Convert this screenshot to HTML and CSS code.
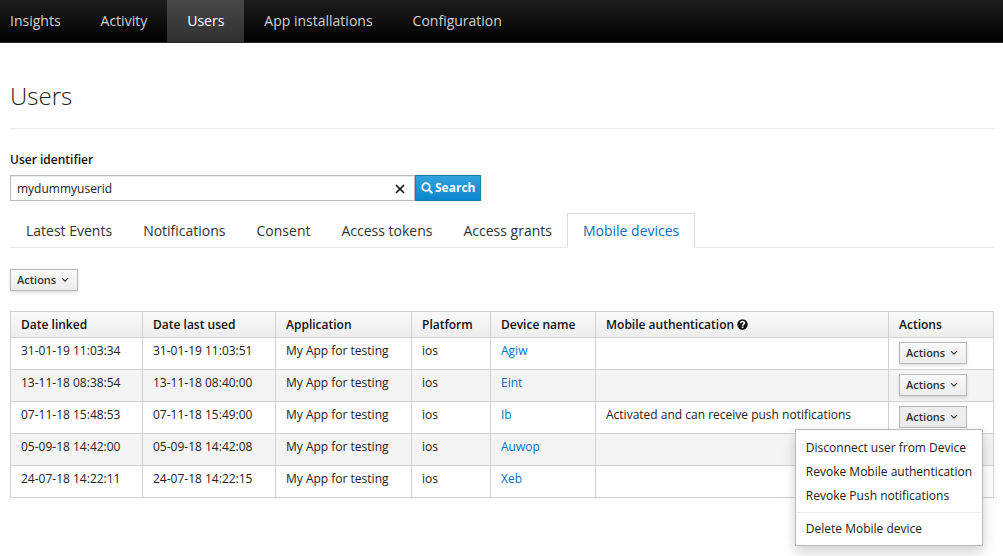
FILE: index.html
```html
<!DOCTYPE html>
<html lang="en">
<head>
    <meta charset="UTF-8">
    <meta name="viewport" content="width=device-width, initial-scale=1.0">
    <title>Users</title>
    <link rel="stylesheet" href="styles.css">
</head>
<body>

<svg class="sprite" aria-hidden="true">
    <symbol id="angle-down" viewBox="0 0 8 6">
        <path d="M1 1.2 L4 4.2 L7 1.2" fill="none" stroke="currentColor" stroke-width="1.2"/>
    </symbol>
</svg>

<nav class="navbar">
    <a href="#">Insights</a>
    <a href="#">Activity</a>
    <a href="#" class="active">Users</a>
    <a href="#">App installations</a>
    <a href="#">Configuration</a>
</nav>

<main class="container">
    <h1>Users</h1>

    <form class="search">
        <label for="userId">User identifier</label>
        <div class="search-row">
            <div class="search-field">
                <input type="text" id="userId" value="mydummyuserid">
                <button type="button" class="clear" aria-label="Clear">
                    <svg width="10" height="10" viewBox="0 0 10 10"><path d="M1 1 L9 9 M9 1 L1 9" stroke="currentColor" stroke-width="1.7"/></svg>
                </button>
            </div>
            <button type="submit" class="btn-primary">
                <svg width="12" height="12" viewBox="0 0 12 12"><circle cx="5" cy="5" r="3.8" fill="none" stroke="currentColor" stroke-width="1.7"/><path d="M7.8 7.8 L10.8 10.8" stroke="currentColor" stroke-width="2.1" stroke-linecap="round"/></svg>
                Search
            </button>
        </div>
    </form>

    <div class="tabs">
        <a href="#">Latest Events</a>
        <a href="#">Notifications</a>
        <a href="#">Consent</a>
        <a href="#">Access tokens</a>
        <a href="#">Access grants</a>
        <a href="#" class="active">Mobile devices</a>
    </div>

    <button type="button" class="btn">Actions <svg width="8" height="6"><use href="#angle-down"/></svg></button>

    <table class="devices">
        <colgroup>
            <col class="col-linked">
            <col class="col-used">
            <col class="col-app">
            <col class="col-platform">
            <col class="col-name">
            <col>
            <col class="col-actions">
        </colgroup>
        <thead>
            <tr>
                <th>Date linked</th>
                <th>Date last used</th>
                <th>Application</th>
                <th>Platform</th>
                <th>Device name</th>
                <th>Mobile authentication <svg class="help" width="11" height="11" viewBox="0 0 11 11"><circle cx="5.5" cy="5.5" r="5.2" fill="currentColor"/><path d="M3.6 4.2 C3.7 2.1 7.4 2.1 7.4 4.1 C7.4 5.4 5.6 5.3 5.6 6.7" fill="none" stroke="#fff" stroke-width="1.5"/><rect x="4.8" y="7.5" width="1.6" height="1.5" fill="#fff"/></svg></th>
                <th>Actions</th>
            </tr>
        </thead>
        <tbody>
            <tr>
                <td>31-01-19 11:03:34</td>
                <td>31-01-19 11:03:51</td>
                <td>My App for testing</td>
                <td>ios</td>
                <td><a href="#">Agiw</a></td>
                <td></td>
                <td><button type="button" class="btn">Actions <svg width="8" height="6"><use href="#angle-down"/></svg></button></td>
            </tr>
            <tr>
                <td>13-11-18 08:38:54</td>
                <td>13-11-18 08:40:00</td>
                <td>My App for testing</td>
                <td>ios</td>
                <td><a href="#">Eint</a></td>
                <td></td>
                <td><button type="button" class="btn">Actions <svg width="8" height="6"><use href="#angle-down"/></svg></button></td>
            </tr>
            <tr>
                <td>07-11-18 15:48:53</td>
                <td>07-11-18 15:49:00</td>
                <td>My App for testing</td>
                <td>ios</td>
                <td><a href="#">Ib</a></td>
                <td>Activated and can receive push notifications</td>
                <td>
                    <div class="dropdown">
                        <button type="button" class="btn open" aria-expanded="true">Actions <svg width="8" height="6"><use href="#angle-down"/></svg></button>
                        <ul class="dropdown-menu">
                            <li><a href="#">Disconnect user from Device</a></li>
                            <li><a href="#">Revoke Mobile authentication</a></li>
                            <li><a href="#">Revoke Push notifications</a></li>
                            <li class="divider"></li>
                            <li><a href="#">Delete Mobile device</a></li>
                        </ul>
                    </div>
                </td>
            </tr>
            <tr>
                <td>05-09-18 14:42:00</td>
                <td>05-09-18 14:42:08</td>
                <td>My App for testing</td>
                <td>ios</td>
                <td><a href="#">Auwop</a></td>
                <td></td>
                <td></td>
            </tr>
            <tr>
                <td>24-07-18 14:22:11</td>
                <td>24-07-18 14:22:15</td>
                <td>My App for testing</td>
                <td>ios</td>
                <td><a href="#">Xeb</a></td>
                <td></td>
                <td></td>
            </tr>
        </tbody>
    </table>
</main>

</body>
</html>
```

FILE: styles.css
```css
* {
    box-sizing: border-box;
}
body {
    margin: 0;
    min-height: 100vh;
    font-family: "Open Sans", sans-serif;
    font-size: 12px;
    line-height: 18px;
    color: #222;
    background-color: #fff;
}
a {
    color: #0a6ec7;
    text-decoration: none;
}
.sprite {
    display: none;
}

/* top navigation */
.navbar {
    display: flex;
    height: 43px;
    background: linear-gradient(#1d1d1d, #000);
    border-bottom: 1px solid #2b2b2b;
}
.navbar a {
    padding: 11px 20px;
    font-size: 14px;
    line-height: 20px;
    color: #d1d1d1;
}
.navbar a:first-child {
    padding-left: 10px;
}
.navbar a.active {
    color: #fff;
    background: linear-gradient(#474747, #303030);
}

.container {
    padding: 0 9px 0 10px;
}
h1 {
    margin: 38px 0 22px;
    padding-bottom: 17px;
    border-bottom: 1px solid #ededed;
    font-size: 24px;
    font-weight: 300;
    line-height: 30px;
}

/* search */
.search label {
    display: block;
    margin-bottom: 6px;
    font-weight: 600;
    color: #111;
}
.search-row {
    display: flex;
}
.search-field {
    display: flex;
    align-items: center;
    width: 405px;
    height: 26px;
    border: 1px solid #bababa;
    box-shadow: inset 0 1px 1px rgba(0, 0, 0, 0.08);
}
.search-field input {
    flex: 1;
    min-width: 0;
    padding: 2px 6px 0;
    border: 0;
    outline: 0;
    background: none;
    font: inherit;
    color: #222;
}
.clear {
    display: flex;
    padding: 2px 9px 0;
    border: 0;
    background: none;
    color: #111;
}
.btn-primary {
    display: flex;
    align-items: center;
    gap: 2px;
    height: 26px;
    padding: 0 5px;
    border: 1px solid #267da1;
    background: linear-gradient(#31a2dd, #0a85cc);
    font: inherit;
    font-weight: 700;
    color: #fff;
}

/* tabs */
.tabs {
    display: flex;
    margin: 12px 0 21px;
    border-bottom: 1px solid #e9e9e9;
}
.tabs a {
    padding: 8px 15px 7px;
    margin: 0 -1px -1px 0;
    border: 1px solid transparent;
    font-size: 14px;
    color: #333;
}
.tabs a.active {
    color: #0a6ec7;
    border-color: #dcdcdc;
    border-bottom-color: #fff;
    background-color: #fff;
}

.btn {
    display: flex;
    align-items: center;
    gap: 5px;
    height: 22px;
    padding: 0 8px 0 6px;
    border: 1px solid #b7b7b7;
    background: linear-gradient(#fafafa, #ededed);
    box-shadow: 0 2px 3px rgba(0, 0, 0, 0.12);
    font: inherit;
    font-size: 11px;
    font-weight: 600;
    color: #333;
}
.btn.open {
    background: #ededed;
    box-shadow: none;
}

/* devices table */
.devices {
    width: 100%;
    margin-top: 20px;
    table-layout: fixed;
    border-collapse: collapse;
}
.col-linked {
    width: 132px;
}
.col-used {
    width: 133px;
}
.col-app {
    width: 136px;
}
.col-platform {
    width: 79px;
}
.col-name {
    width: 105px;
}
.col-actions {
    width: 105px;
}
.devices th,
.devices td {
    height: 32px;
    padding: 4px 10px 5px;
    border: 1px solid #d1d1d1;
    text-align: left;
    vertical-align: top;
}
.devices th {
    height: 26px;
    padding: 4px 10px 3px;
    font-weight: 600;
    color: #111;
}
.devices thead {
    background: linear-gradient(#fafafa, #ededed);
}
.devices tbody tr:nth-child(even) {
    background-color: #f4f4f4;
}
.help {
    vertical-align: -1px;
}

.dropdown {
    position: relative;
}
.dropdown-menu {
    position: absolute;
    top: 23px;
    right: 0;
    z-index: 10;
    margin: 0;
    padding: 6px 0 4px;
    border: 1px solid #b7b7b7;
    background-color: #fff;
    box-shadow: 0 6px 12px rgba(0, 0, 0, 0.18);
    list-style: none;
    white-space: nowrap;
}
.dropdown-menu a {
    display: block;
    padding: 3px 10px;
    color: #222;
}
.dropdown-menu .divider {
    height: 1px;
    margin: 4px 1px;
    background-color: #ededed;
}
```
